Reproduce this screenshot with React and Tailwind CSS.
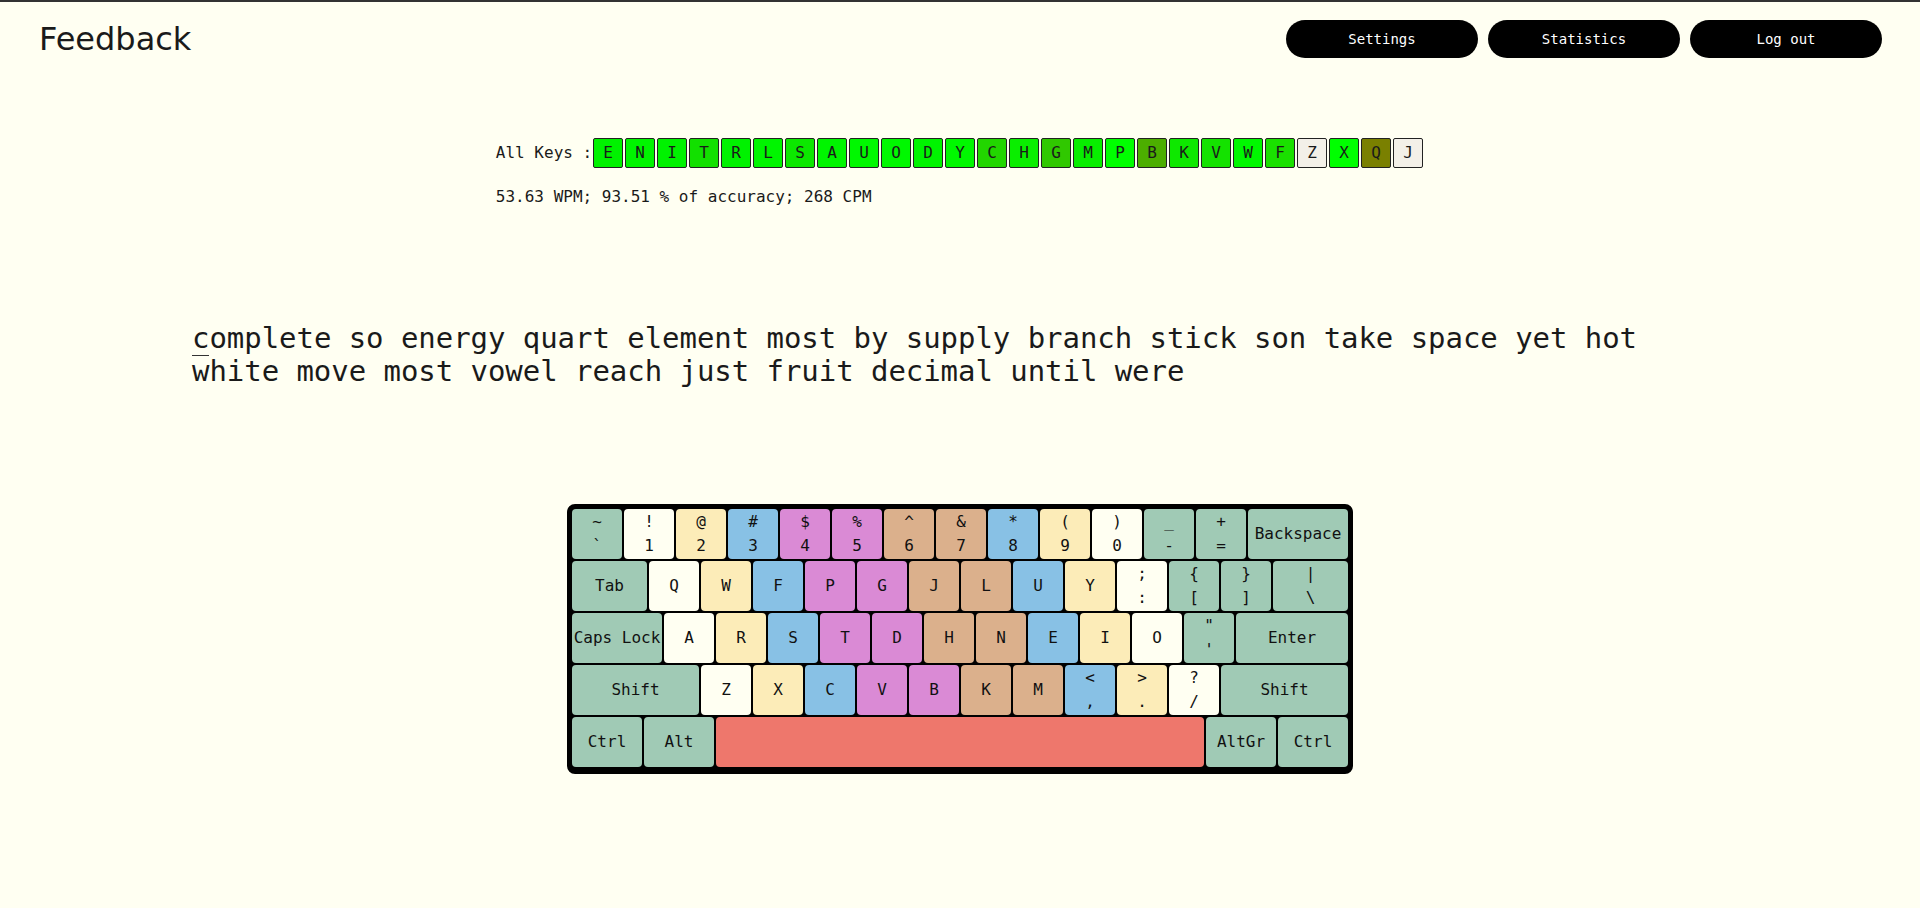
import React from "react";

const mono = "font-['DejaVu_Sans_Mono','Liberation_Mono',monospace]";

// colour groups used on the keyboard (finger zones)
const C = {
  g: "bg-[#a0cab5]",
  w: "bg-[#fffff2]",
  y: "bg-[#fcecb8]",
  b: "bg-[#88c1e5]",
  p: "bg-[#da8ad5]",
  t: "bg-[#dbb08c]",
  r: "bg-[#ee776c]",
};

const k = (label, c, w = "w-[50px]") => ({ label, c, w });
const d = (top, bottom, c, w = "w-[50px]") => ({ top, bottom, c, w });

const rows = [
  [
    d("~", "`", C.g),
    d("!", "1", C.w),
    d("@", "2", C.y),
    d("#", "3", C.b),
    d("$", "4", C.p),
    d("%", "5", C.p),
    d("^", "6", C.t),
    d("&", "7", C.t),
    d("*", "8", C.b),
    d("(", "9", C.y),
    d(")", "0", C.w),
    d("_", "-", C.g),
    d("+", "=", C.g),
    k("Backspace", C.g, "w-[100px]"),
  ],
  [
    k("Tab", C.g, "w-[75px]"),
    k("Q", C.w),
    k("W", C.y),
    k("F", C.b),
    k("P", C.p),
    k("G", C.p),
    k("J", C.t),
    k("L", C.t),
    k("U", C.b),
    k("Y", C.y),
    d(";", ":", C.w),
    d("{", "[", C.g),
    d("}", "]", C.g),
    d("|", "\\", C.g, "w-[75px]"),
  ],
  [
    k("Caps Lock", C.g, "w-[90px]"),
    k("A", C.w),
    k("R", C.y),
    k("S", C.b),
    k("T", C.p),
    k("D", C.p),
    k("H", C.t),
    k("N", C.t),
    k("E", C.b),
    k("I", C.y),
    k("O", C.w),
    d('"', "'", C.g),
    k("Enter", C.g, "w-[112px]"),
  ],
  [
    k("Shift", C.g, "w-[127px]"),
    k("Z", C.w),
    k("X", C.y),
    k("C", C.b),
    k("V", C.p),
    k("B", C.p),
    k("K", C.t),
    k("M", C.t),
    d("<", ",", C.b),
    d(">", ".", C.y),
    d("?", "/", C.w),
    k("Shift", C.g, "w-[127px]"),
  ],
  [
    k("Ctrl", C.g, "w-[70px]"),
    k("Alt", C.g, "w-[70px]"),
    k("", C.r, "w-[488px]"),
    k("AltGr", C.g, "w-[70px]"),
    k("Ctrl", C.g, "w-[70px]"),
  ],
];

// per-key heat colours, most practised first
const allKeys = [
  ["E", "bg-[#00f200]"],
  ["N", "bg-[#00f500]"],
  ["I", "bg-[#00f200]"],
  ["T", "bg-[#12e000]"],
  ["R", "bg-[#00f200]"],
  ["L", "bg-[#00f500]"],
  ["S", "bg-[#0ce800]"],
  ["A", "bg-[#00f500]"],
  ["U", "bg-[#00f800]"],
  ["O", "bg-[#00f800]"],
  ["D", "bg-[#00f400]"],
  ["Y", "bg-[#00f800]"],
  ["C", "bg-[#22d600]"],
  ["H", "bg-[#0aee00]"],
  ["G", "bg-[#30c800]"],
  ["M", "bg-[#08ee00]"],
  ["P", "bg-[#00ff00]"],
  ["B", "bg-[#4cae00]"],
  ["K", "bg-[#0ee800]"],
  ["V", "bg-[#14e200]"],
  ["W", "bg-[#00f800]"],
  ["F", "bg-[#1ae000]"],
  ["Z", "bg-[#f3f0e8]"],
  ["X", "bg-[#00ff00]"],
  ["Q", "bg-[#7a8000]"],
  ["J", "bg-[#f3f0e8]"],
];

function Key({ item }) {
  return (
    <div
      className={`${item.w} h-[50px] ${item.c} rounded-[4px] flex flex-col items-center justify-center text-[16px] text-[#111]`}
    >
      {item.top !== undefined ? (
        <>
          <span className="leading-[24px]">{item.top}</span>
          <span className="leading-[24px]">{item.bottom}</span>
        </>
      ) : (
        <span className="whitespace-nowrap">{item.label}</span>
      )}
    </div>
  );
}

export default function App() {
  return (
    <div
      className={`min-h-[908px] bg-[#fffff2] border-t-2 border-[#333] text-[#1a1a1a] ${mono}`}
    >
      {/* Header */}
      <header className="h-[74px] pl-[39px] pr-[38px] flex items-center justify-between">
        <h1 className="font-['DejaVu_Sans',sans-serif] text-[32px] font-normal text-[#1a1a1a]">
          Feedback
        </h1>
        <nav className="flex gap-[10px]">
          {["Settings", "Statistics", "Log out"].map((label) => (
            <button
              key={label}
              className="w-[192px] h-[38px] rounded-full bg-black text-white text-[14px]"
            >
              {label}
            </button>
          ))}
        </nav>
      </header>

      {/* Key stats */}
      <div className="mt-[61px] flex justify-center">
        <div className="text-[16px]">
          <div className="flex items-center">
            <span className="whitespace-pre">All Keys :</span>
            {allKeys.map(([letter, bg]) => (
              <span
                key={letter}
                className={`m-px w-[30px] h-[30px] border border-[#222] rounded-[2px] flex items-center justify-center ${bg}`}
              >
                {letter}
              </span>
            ))}
          </div>
          <p className="mt-4 leading-[24px]">
            53.63 WPM; 93.51 % of accuracy; 268 CPM
          </p>
        </div>
      </div>

      {/* Text to type, first letter carries the cursor */}
      <div className="mt-[113px] mx-auto w-[80%] text-[29px] tracking-[-0.05px] leading-[33px] text-[#1a1a1a]">
        <span className="border-b border-[#333]">c</span>
        omplete so energy quart element most by supply branch stick son take
        space yet hot white move most vowel reach just fruit decimal until were
      </div>

      {/* Keyboard */}
      <div className="mt-[116px] flex justify-center">
        <div className="flex flex-col gap-[2px] bg-black border-[5px] border-b-[7px] border-black rounded-[8px]">
          {rows.map((row, i) => (
            <div key={i} className="flex gap-[2px]">
              {row.map((item, j) => (
                <Key key={j} item={item} />
              ))}
            </div>
          ))}
        </div>
      </div>
    </div>
  );
}
